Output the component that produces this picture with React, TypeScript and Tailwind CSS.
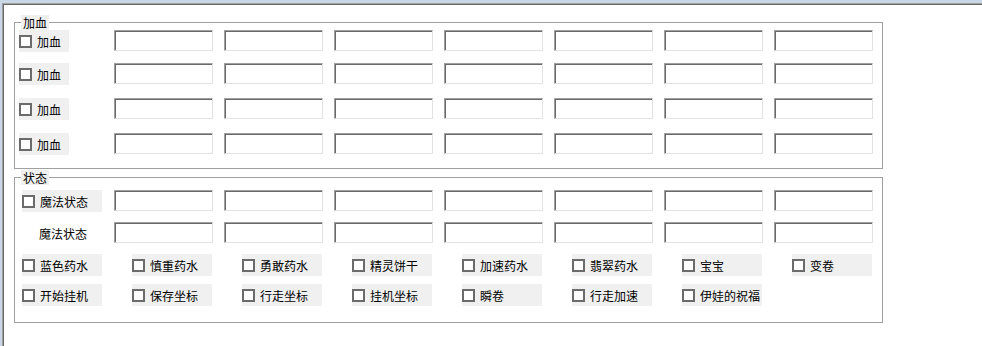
import React from 'react';

const FONT = { fontFamily: '"Noto Sans CJK SC", "Noto Sans", sans-serif' };

const POTIONS = ['蓝色药水', '慎重药水', '勇敢药水', '精灵饼干', '加速药水', '翡翠药水', '宝宝', '变卷'];
const ACTIONS = ['开始挂机', '保存坐标', '行走坐标', '挂机坐标', '瞬卷', '行走加速', '伊娃的祝福'];

function Box() {
  return <span className="w-[13px] h-[13px] shrink-0 border-2 border-[#6b6b6b] bg-white" />;
}

function Field() {
  return (
    <div className="w-[99px] h-[21px] border-t border-l border-b border-r border-t-[#a0a0a0] border-l-[#a0a0a0] border-b-[#e3e3e3] border-r-[#e3e3e3]">
      <div className="w-full h-full border-t border-l border-t-[#696969] border-l-[#696969] bg-white" />
    </div>
  );
}

function Fields() {
  return (
    <div className="flex gap-[11px]">
      {Array.from({ length: 7 }).map((_, i) => (
        <Field key={i} />
      ))}
    </div>
  );
}

function Check({ label, width }: { label: string; width: string }) {
  return (
    <div className={`${width} h-[22px] bg-[#f0f0f0] flex items-center gap-[5px] text-[12px] leading-[15px] text-black`}>
      <Box />
      <span className="whitespace-nowrap">{label}</span>
    </div>
  );
}

function Legend({ text }: { text: string }) {
  return (
    <legend className="ml-[6px] px-[2px] bg-[#f0f0f0] text-[12px] leading-[15px] text-black">{text}</legend>
  );
}

export default function App() {
  return (
    <div className="w-[982px] h-[346px] bg-[#c9d7e7] pt-[3px] pl-[2px] overflow-hidden" style={FONT}>
      <div className="h-full border-t border-l border-[#a0a0a0]">
        <div className="h-full border-t border-l border-[#696969] bg-white">
          {/* 加血 */}
          <fieldset className="ml-[10px] mt-[10px] w-[869px] border border-[#a0a0a0] pb-[13px]">
            <Legend text="加血" />
            <div className="flex flex-col pl-[4px]">
              {[0, 1, 2, 3].map((i) => (
                <div
                  key={i}
                  className={`flex items-start gap-[45px] ${i === 0 ? 'mt-0' : i === 1 ? 'mt-[11px]' : 'mt-[13px]'}`}
                >
                  <Check label="加血" width="w-[50px]" />
                  <Fields />
                </div>
              ))}
            </div>
          </fieldset>

          {/* 状态 */}
          <fieldset className="ml-[10px] mt-px w-[869px] border border-[#a0a0a0] pb-[16px]">
            <Legend text="状态" />
            <div className="flex flex-col pl-[7px]">
              <div className="mt-[5px] flex items-start gap-[12px]">
                <Check label="魔法状态" width="w-[80px]" />
                <Fields />
              </div>
              <div className="mt-[10px] flex items-start gap-[12px]">
                <div className="w-[80px] h-[22px] flex items-center pl-[17px] text-[12px] leading-[15px] text-black">
                  魔法状态
                </div>
                <Fields />
              </div>
              <div className="mt-[10px] flex gap-[30px]">
                {POTIONS.map((p) => (
                  <Check key={p} label={p} width="w-[80px]" />
                ))}
              </div>
              <div className="mt-[8px] flex gap-[30px]">
                {ACTIONS.map((p) => (
                  <Check key={p} label={p} width="w-[80px]" />
                ))}
              </div>
            </div>
          </fieldset>
        </div>
      </div>
    </div>
  );
}
